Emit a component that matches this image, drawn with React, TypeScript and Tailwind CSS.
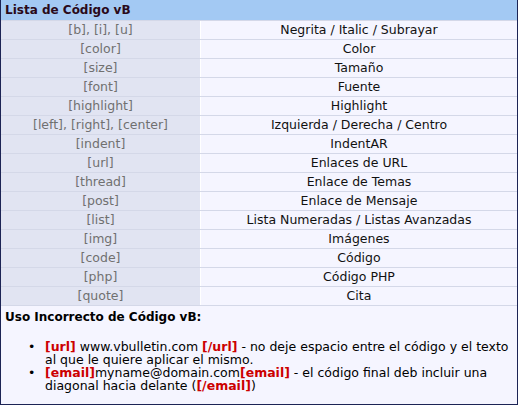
const rows: [string, string][] = [
  ["[b], [i], [u]", "Negrita / Italic / Subrayar"],
  ["[color]", "Color"],
  ["[size]", "Tamaño"],
  ["[font]", "Fuente"],
  ["[highlight]", "Highlight"],
  ["[left], [right], [center]", "Izquierda / Derecha / Centro"],
  ["[indent]", "IndentAR"],
  ["[url]", "Enlaces de URL"],
  ["[thread]", "Enlace de Temas"],
  ["[post]", "Enlace de Mensaje"],
  ["[list]", "Lista Numeradas / Listas Avanzadas"],
  ["[img]", "Imágenes"],
  ["[code]", "Código"],
  ["[php]", "Código PHP"],
  ["[quote]", "Cita"],
];

function Red({ children }: { children: React.ReactNode }) {
  return <span className="font-bold text-[#cc0000]">{children}</span>;
}

export default function App() {
  return (
    <div className="w-[520px] h-[406px] bg-white" style={{ fontFamily: '"DejaVu Sans", Verdana, sans-serif' }}>
      <div className="w-[518px] h-[405px] border-l border-r border-b border-[#1c2455] bg-[#f5f5ff] flex flex-col">
        <div className="h-[20px] bg-[#a3c9f3] flex items-center px-[4px] text-[12px] font-bold text-[#2a0a1a]">
          Lista de Código vB
        </div>
        <div className="flex flex-col">
          {rows.map(([code, desc]) => (
            <div key={code} className="flex h-[19px] border-t border-[#d4d8e8] text-[12.5px]">
              <div className="w-[199px] bg-[#e1e4f2] text-[#707070] flex items-center justify-center">{code}</div>
              <div className="w-px bg-white" />
              <div className="flex-1 flex items-center justify-center text-[#111]">{desc}</div>
            </div>
          ))}
        </div>
        <div className="border-t border-[#d4d8e8] px-[4px] pt-[2px] text-[12px] text-black">
          <div className="font-bold">Uso Incorrecto de Código vB:</div>
          <ul className="ml-[40px] mt-[14px] text-[12.5px] leading-[13px]">
            <li className="relative">
              <span className="absolute left-[-17px] top-0">•</span>
              <Red>[url]</Red> www.vbulletin.com <Red>[/url]</Red> - no deje espacio entre el código y el texto al que le quiere aplicar el mismo.
            </li>
            <li className="relative">
              <span className="absolute left-[-17px] top-0">•</span>
              <Red>[email]</Red>myname@domain.com<Red>[email]</Red> - el código final deb incluir una diagonal hacia delante (<Red>[/email]</Red>)
            </li>
          </ul>
        </div>
      </div>
    </div>
  );
}
